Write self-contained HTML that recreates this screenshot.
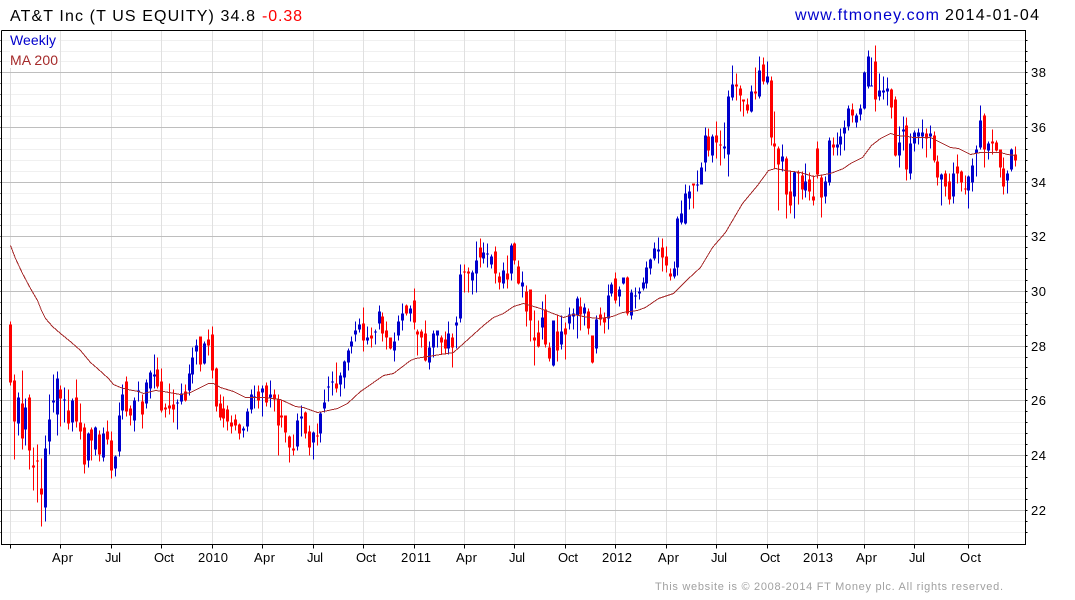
<!DOCTYPE html>
<html>
<head>
<meta charset="utf-8">
<title>AT&amp;T Inc</title>
<style>
html,body{margin:0;padding:0;background:#fff;width:1075px;height:600px;overflow:hidden}
svg{display:block;position:absolute;left:0;top:0}
text{font-family:"Liberation Sans",Arial,sans-serif}
.ax{font-size:13px;fill:#000}
</style>
</head>
<body>
<svg width="1075" height="600" viewBox="0 0 1075 600" xmlns="http://www.w3.org/2000/svg">
<rect width="1075" height="600" fill="#fff"/>
<g transform="translate(.5 .5)" shape-rendering="crispEdges" fill="none">
<path stroke="#f0f0f0" d="M1 40H1025M1 51H1025M1 61H1025M1 83H1025M1 94H1025M1 105H1025M1 116H1025M1 138H1025M1 149H1025M1 160H1025M1 171H1025M1 193H1025M1 203H1025M1 214H1025M1 225H1025M1 247H1025M1 258H1025M1 269H1025M1 280H1025M1 302H1025M1 313H1025M1 324H1025M1 335H1025M1 357H1025M1 367H1025M1 378H1025M1 389H1025M1 411H1025M1 422H1025M1 433H1025M1 444H1025M1 466H1025M1 477H1025M1 488H1025M1 499H1025M1 521H1025M1 532H1025"/>
<path stroke="#e0e0e0" d="M10 30V544M60 30V544M111 30V544M161 30V544M212 30V544M262 30V544M313 30V544M363 30V544M414 30V544M464 30V544M514 30V544M565 30V544M615 30V544M666 30V544M716 30V544M767 30V544M817 30V544M864 30V544M914 30V544M968 30V544"/>
<path stroke="#bebebe" d="M1 72H1025M1 127H1025M1 182H1025M1 236H1025M1 291H1025M1 346H1025M1 400H1025M1 455H1025M1 510H1025"/>
</g>
<rect x="10" y="31" width="49" height="37" fill="#fff"/>
<g transform="translate(.5 .5)" shape-rendering="crispEdges" fill="none">
<!-- red wicks -->
<path stroke="#ff0000" stroke-width="1" d="M10 321V385M14 374V459M22 370V449M29 394V469M33 447V490M37 444V502M41 458V526M60 385V426M68 389V429M76 379V427M80 403V439M84 423V473M91 427V460M99 430V461M107 420V444M111 431V478M126 376V416M130 405V425M142 394V428M157 357V388M161 368V412M165 403V417M169 383V414M173 389V422M185 384V401M200 336V371M208 329V355M212 326V378M216 367V411M220 394V420M223 396V427M227 405V430M231 415V433M235 414V430M239 423V439M258 385V408M266 382V406M274 389V411M278 394V455M281 399V427M285 415V442M289 435V462M293 434V455M305 411V438M309 425V455M317 423V445M336 362V392M363 307V351M371 327V347M382 312V341M386 321V349M390 337V349M406 304V315M414 288V329M417 329V355M421 329V347M425 320V361M441 335V354M445 331V354M452 333V367M464 264V292M468 267V292M480 238V267M495 246V283M499 272V289M507 255V288M514 242V264M518 260V284M526 285V326M530 289V341M534 310V365M538 320V347M545 294V347M549 342V361M557 314V361M565 322V359M580 297V330M588 308V334M592 335V363M600 307V325M604 312V333M615 272V303M627 276V315M662 238V271M666 246V272M670 268V280M693 183V208M708 128V156M716 121V158M720 130V165M736 73V100M740 85V111M743 99V116M747 98V113M755 67V99M763 57V84M771 76V145M774 111V168M778 146V210M786 156V218M790 170V213M798 170V204M802 171V199M809 172V200M813 175V205M817 141V178M821 175V217M833 137V155M852 103V122M875 45V111M891 88V118M895 96V156M906 117V180M926 128V157M934 131V162M937 155V185M945 170V196M949 173V204M957 154V183M961 170V191M965 175V194M984 113V167M992 129V154M996 140V151M1000 149V177M1003 157V194M1015 146V166"/>
<!-- red bodies -->
<path stroke="#ff0000" stroke-width="3" d="M10 324V382M14 380V421M22 403V438M29 397V450M33 465V467M37 460V461M41 488V494M60 389V398M68 410V423M76 397V421M80 422V431M84 427V464M91 429V440M99 434V454M107 431V439M111 440V470M126 381V411M130 408V415M142 401V414M157 369V386M161 381V410M165 407V409M169 405V408M173 404V409M185 391V400M200 336V364M208 339V345M212 334V370M216 368V406M220 403V417M223 408V418M227 409V421M231 422V426M235 419V425M239 424V433M258 391V400M266 385V402M274 394V399M278 399V425M281 415V417M285 415V432M289 436V447M293 448V450M305 412V433M309 431V447M317 435V436M336 383V388M363 323V340M371 335V338M382 316V333M386 330V337M390 337V348M406 305V313M414 300V322M417 331V334M421 331V337M425 333V360M441 337V342M445 339V348M452 337V347M464 271V272M468 271V273M480 247V257M495 251V273M499 276V282M507 273V279M514 243V260M518 266V283M526 291V311M530 289V320M534 337V340M538 332V346M545 309V344M549 347V358M557 331V350M565 328V334M580 306V314M588 311V328M592 335V362M600 314V319M604 317V322M615 278V300M627 277V313M662 247V257M666 256V265M670 273V276M693 183V185M708 136V150M716 135V142M720 144V145M736 84V86M740 88V95M743 99V101M747 104V110M755 91V93M763 64V81M771 80V137M774 143V146M778 148V164M786 158V194M790 191V205M798 172V173M802 175V189M809 179V191M813 196V200M817 148V174M821 177V197M833 144V147M852 109V115M875 61V99M891 89V107M895 99V155M906 125V169M926 133V138M934 135V160M937 161V177M945 173V186M949 181V199M957 166V173M961 171V182M965 188V189M984 115V149M992 141V143M996 142V150M1000 149V167M1003 168V186M1015 154V160"/>
<!-- blue wicks -->
<path stroke="#0000cc" stroke-width="1" d="M18 392V435M25 398V445M45 435V521M49 394V454M53 374V412M57 371V435M64 387V422M72 398V431M88 432V467M95 426V455M103 427V461M115 455V476M119 402V456M122 384V419M134 397V431M138 381V401M146 379V408M150 370V398M154 354V388M177 399V429M181 383V404M189 364V395M192 347V383M196 339V364M204 341V364M243 426V437M247 408V431M251 389V413M254 385V408M262 385V416M270 380V407M297 413V450M301 405V436M313 431V459M320 412V442M324 389V412M328 376V401M332 371V395M340 372V396M344 360V388M348 348V370M351 336V353M355 321V341M359 318V332M367 326V344M375 329V344M379 305V329M394 332V361M398 315V340M402 303V330M410 305V321M429 341V369M433 330V357M437 330V347M448 321V354M456 316V348M460 264V322M472 270V294M476 241V292M483 242V263M487 243V267M491 254V268M503 262V288M511 243V280M522 271V297M542 301V339M553 320V366M561 315V349M569 307V329M573 308V329M577 296V338M584 303V325M596 315V353M608 284V329M611 282V296M619 286V306M623 277V284M631 289V319M635 287V308M639 287V299M643 277V290M646 261V288M650 258V274M654 242V260M658 237V263M674 261V278M677 216V275M681 200V224M685 184V224M689 185V209M697 170V191M701 162V184M705 127V171M712 134V162M724 122V158M728 90V176M732 65V100M751 85V112M759 56V98M767 61V84M782 144V171M794 171V218M805 163V197M825 176V203M829 137V185M837 132V155M840 128V155M844 120V150M848 105V130M856 113V127M860 104V120M864 71V109M868 50V88M871 57V86M879 73V100M883 76V99M887 77V105M899 126V167M903 116V150M910 133V179M914 130V151M918 128V144M922 119V148M930 125V148M941 173V205M953 162V203M968 175V208M972 158V191M976 145V176M980 105V149M988 141V159M1007 170V193M1011 148V171"/>
<!-- blue bodies -->
<path stroke="#0000cc" stroke-width="3" d="M18 397V423M25 407V429M45 448V507M49 419V441M53 400V402M57 378V414M64 399V400M72 400V422M88 433V460M95 427V449M103 433V457M115 456V468M119 415V451M122 394V410M134 400V420M138 390V391M146 382V403M150 372V388M154 374V376M177 402V403M181 393V401M189 373V390M192 357V374M196 345V351M204 343V363M243 428V430M247 411V426M251 394V409M254 396V397M262 388V392M270 394V397M297 420V446M301 416V418M313 432V442M320 413V433M324 402V408M328 386V387M332 381V382M340 375V384M344 361V377M348 350V362M351 341V346M355 330V334M359 324V329M367 337V340M375 331V332M379 311V323M394 341V350M398 321V335M402 313V320M410 308V313M429 347V362M433 333V347M437 330V335M448 333V348M456 322V325M460 274V318M472 272V280M476 260V273M483 252V258M487 253V254M491 256V264M503 270V283M511 245V273M522 282V286M542 317V327M553 320V365M561 331V344M569 314V323M573 313V316M577 298V315M584 307V313M596 319V348M608 295V318M611 284V293M619 289V296M623 277V283M631 292V315M635 295V296M639 291V293M643 282V288M646 267V283M650 259V268M654 248V258M658 249V251M674 268V276M677 218V267M681 213V222M685 193V223M689 191V198M697 184V185M701 167V184M705 135V162M712 136V155M724 146V148M728 96V154M732 84V97M751 91V111M759 70V96M767 76V82M782 156V161M794 172V196M805 181V190M825 181V196M829 140V182M837 144V147M840 136V144M844 127V133M848 108V126M856 115V122M860 108V114M864 72V108M868 56V86M871 85V86M879 90V96M883 90V92M887 88V91M899 142V155M903 129V131M910 143V173M914 132V143M918 132V136M922 132V136M930 133V136M941 174V179M953 173V196M968 176V190M972 165V182M976 149V153M980 120V147M988 143V150M1007 173V180M1011 149V169"/>
<!-- moving average -->
<polyline stroke="#a52a2a" stroke-width="1" points="10,245 15,258 22,273 30,288 37,300 41,310 45,318 52,326 60,333 71,342 80,350 90,362 97,368 108,378 113,384 120,387 127,389 138,391 143,393 155,390 163,391 180,394 190,392 200,387 208,383 213,383 220,387 233,391 245,397 263,397 280,399 295,406 303,407 317,412 323,411 337,408 347,403 360,391 363,389 383,375 393,373 410,360 415,358 440,354 453,352 463,343 483,325 493,317 503,313 513,306 523,303 540,308 550,312 563,317 573,314 588,317 600,318 612,316 622,312 637,310 645,307 658,298 673,293 687,279 700,267 712,247 725,232 742,203 757,185 768,170 775,168 785,170 800,172 813,176 830,173 843,168 850,163 862,157 871,145 880,138 890,133 897,135 907,136 913,137 930,137 950,147 958,148 970,154 980,152 1000,152 1007,154 1015,155"/>
<!-- frame and ticks -->
<path stroke="#000" d="M1 30V544H1025V30H1M1 30"/>
<path stroke="#000" d="M1025 40H1027M1025 51H1027M1025 61H1027M1025 83H1027M1025 94H1027M1025 105H1027M1025 116H1027M1025 138H1027M1025 149H1027M1025 160H1027M1025 171H1027M1025 193H1027M1025 203H1027M1025 214H1027M1025 225H1027M1025 247H1027M1025 258H1027M1025 269H1027M1025 280H1027M1025 302H1027M1025 313H1027M1025 324H1027M1025 335H1027M1025 357H1027M1025 367H1027M1025 378H1027M1025 389H1027M1025 411H1027M1025 422H1027M1025 433H1027M1025 444H1027M1025 466H1027M1025 477H1027M1025 488H1027M1025 499H1027M1025 521H1027M1025 532H1027M1025 72H1027M1025 127H1027M1025 182H1027M1025 236H1027M1025 291H1027M1025 346H1027M1025 400H1027M1025 455H1027M1025 510H1027"/>
<path stroke="#000" d="M0 40H1M0 51H1M0 61H1M0 72H1M0 83H1M0 94H1M0 105H1M0 116H1M0 127H1M0 138H1M0 149H1M0 160H1M0 171H1M0 182H1M0 193H1M0 203H1M0 214H1M0 225H1M0 236H1M0 247H1M0 258H1M0 269H1M0 280H1M0 291H1M0 302H1M0 313H1M0 324H1M0 335H1M0 346H1M0 357H1M0 367H1M0 378H1M0 389H1M0 400H1M0 411H1M0 422H1M0 433H1M0 444H1M0 455H1M0 466H1M0 477H1M0 488H1M0 499H1M0 510H1M0 521H1M0 532H1"/>
<path stroke="#000" d="M10 544V548M60 544V548M111 544V548M161 544V548M212 544V548M262 544V548M313 544V548M363 544V548M414 544V548M464 544V548M514 544V548M565 544V548M615 544V548M666 544V548M716 544V548M767 544V548M817 544V548M864 544V548M914 544V548M968 544V548"/>
</g>
<!-- header -->
<text x="10" y="21" font-size="16" fill="#000" textLength="245" lengthAdjust="spacing">AT&amp;T Inc (T US EQUITY) 34.8</text>
<text x="262" y="21" font-size="16" fill="#ff0000" textLength="40" lengthAdjust="spacing">-0.38</text>
<text x="795" y="20" font-size="16" fill="#0000cc" textLength="144" lengthAdjust="spacing">www.ftmoney.com</text>
<text x="945" y="20" font-size="16" fill="#000" textLength="94" lengthAdjust="spacing">2014-01-04</text>
<!-- legend -->
<text x="10" y="45" font-size="14" fill="#0000cc" textLength="46" lengthAdjust="spacing">Weekly</text>
<text x="10" y="65" font-size="14" fill="#a52a2a" textLength="48" lengthAdjust="spacing">MA 200</text>
<!-- right axis -->
<text class="ax" x="1031" y="77" textLength="15">38</text>
<text class="ax" x="1031" y="132" textLength="15">36</text>
<text class="ax" x="1031" y="187" textLength="15">34</text>
<text class="ax" x="1031" y="241" textLength="15">32</text>
<text class="ax" x="1031" y="296" textLength="15">30</text>
<text class="ax" x="1031" y="351" textLength="15">28</text>
<text class="ax" x="1031" y="405" textLength="15">26</text>
<text class="ax" x="1031" y="460" textLength="15">24</text>
<text class="ax" x="1031" y="515" textLength="15">22</text>
<!-- bottom axis -->
<text class="ax" x="52" y="562" textLength="21">Apr</text>
<text class="ax" x="105" y="562" textLength="16">Jul</text>
<text class="ax" x="154" y="562" textLength="20">Oct</text>
<text class="ax" x="198" y="562" textLength="30">2010</text>
<text class="ax" x="254" y="562" textLength="21">Apr</text>
<text class="ax" x="307" y="562" textLength="16">Jul</text>
<text class="ax" x="356" y="562" textLength="20">Oct</text>
<text class="ax" x="401" y="562" textLength="30">2011</text>
<text class="ax" x="456" y="562" textLength="21">Apr</text>
<text class="ax" x="509" y="562" textLength="16">Jul</text>
<text class="ax" x="558" y="562" textLength="20">Oct</text>
<text class="ax" x="602" y="562" textLength="30">2012</text>
<text class="ax" x="658" y="562" textLength="21">Apr</text>
<text class="ax" x="711" y="562" textLength="16">Jul</text>
<text class="ax" x="760" y="562" textLength="20">Oct</text>
<text class="ax" x="803" y="562" textLength="30">2013</text>
<text class="ax" x="856" y="562" textLength="21">Apr</text>
<text class="ax" x="909" y="562" textLength="16">Jul</text>
<text class="ax" x="960" y="562" textLength="21">Oct</text>
<!-- footer -->
<text x="655" y="590" font-size="11" fill="#a0a0a0" textLength="348" lengthAdjust="spacing">This website is © 2008-2014 FT Money plc. All rights reserved.</text>
</svg>
</body>
</html>
